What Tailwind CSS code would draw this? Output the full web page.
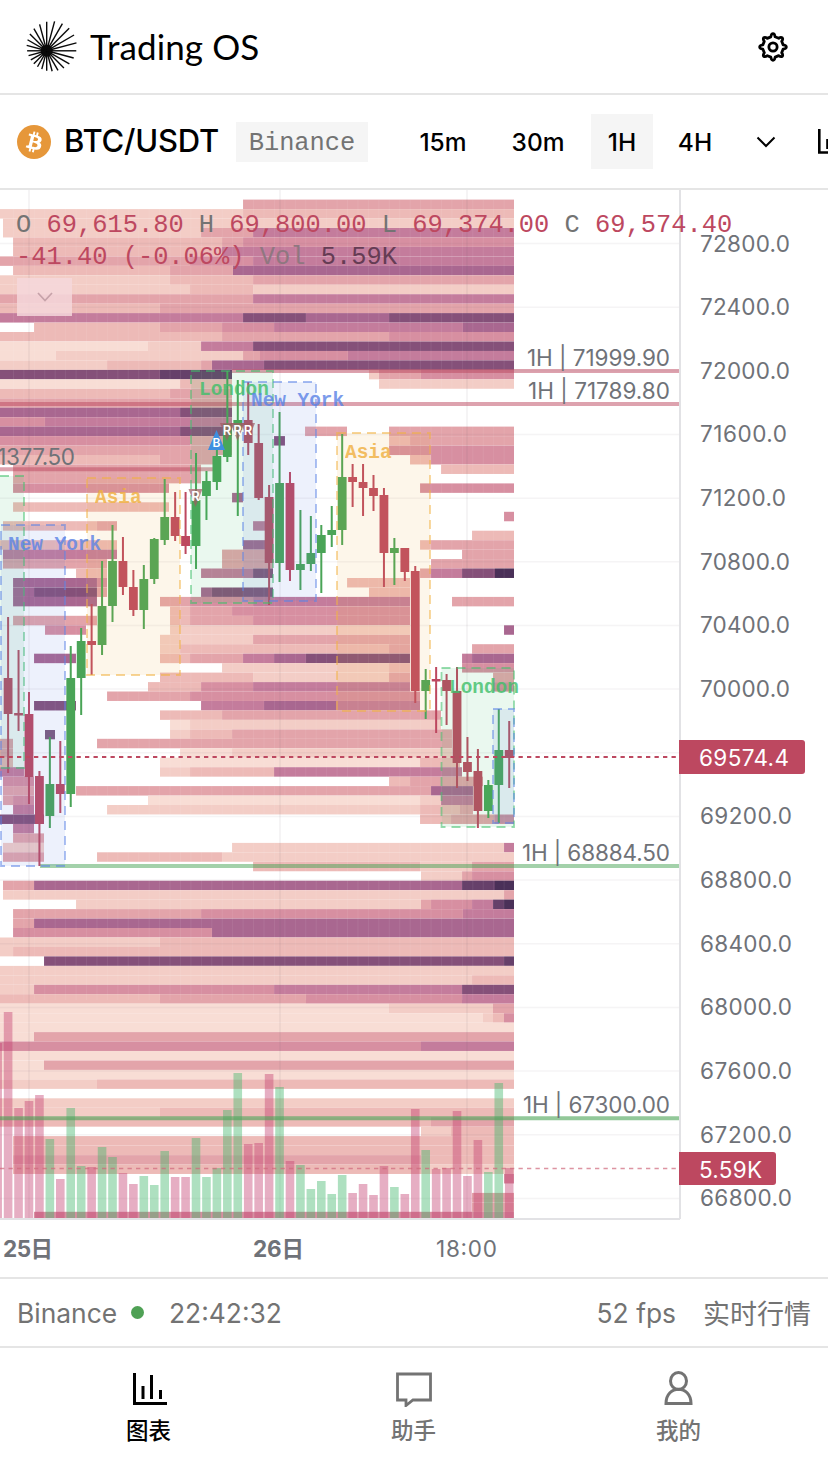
<!DOCTYPE html>
<html lang="zh">
<head>
    <meta charset="UTF-8">
    <meta name="viewport" content="width=device-width, initial-scale=1.0">
    <title>Trading OS</title>
    <script src="https://cdn.jsdelivr.net/npm/@tailwindcss/browser@4"></script>
</head>
<body class="bg-white text-black w-[828px] h-[1464px] overflow-hidden flex flex-col font-['Inter','Noto_Sans_CJK_SC',sans-serif]">
    <header class="h-[95px] shrink-0 border-b-2 border-[#e5e5e5] flex items-center justify-between pl-[26px] pr-[39px]">
        <div class="flex items-center gap-3">
            <svg id="logo" class="w-[52px] h-[52px] mb-0.5" viewBox="0 0 52 52"></svg>
            <h1 class="font-['Lato'] text-[35px] leading-none tracking-[0.1px]">Trading OS</h1>
        </div>
        <button>
            <svg class="w-8 h-8" viewBox="0 0 24 24" fill="none" stroke="currentColor" stroke-width="2.1" stroke-linejoin="round">
                <circle cx="12" cy="12" r="3.1"/>
                <path d="M19.62 10.4L18.52 7.74Q19.7 6.3 19 5.2Q17.9 4.3 16.26 5.48L13.56 4.37Q13.2 2 12 2Q10.8 2 10.35 4.4L7.7 5.5Q6.1 4.3 5 5Q4.3 6.1 5.45 7.79L4.37 10.45Q2 10.8 2 12Q2 13.2 4.4 13.65L5.5 16.3Q4.3 17.9 5 19Q6.1 19.7 7.79 18.54L10.4 19.6Q10.8 22 12 22Q13.2 22 13.6 19.6L16.26 18.5Q17.9 19.7 19 19Q19.7 17.9 18.52 16.25L19.6 13.6Q22 13.2 22 12Q22 10.8 19.62 10.4Z"/>
            </svg>
        </button>
    </header>

    <div class="h-[95px] shrink-0 border-b-2 border-[#e5e5e5] flex items-center pl-[17px] overflow-hidden whitespace-nowrap">
        <svg class="w-[34px] h-[34px] shrink-0" viewBox="0 0 32 32">
            <circle cx="16" cy="16" r="16" fill="#e6973a"/>
            <path fill="#fff" d="M23.189 14.02c.314-2.096-1.283-3.223-3.465-3.975l.708-2.84-1.728-.43-.69 2.765c-.454-.114-.92-.22-1.385-.326l.695-2.783L15.596 6l-.708 2.839c-.376-.086-.746-.17-1.104-.26l.002-.009-2.384-.595-.46 1.846s1.283.294 1.256.312c.7.175.826.638.805 1.006l-.806 3.235c.048.012.11.03.18.057l-.183-.045-1.13 4.532c-.086.212-.303.531-.793.41.018.025-1.256-.313-1.256-.313l-.858 1.978 2.25.561c.418.105.828.215 1.231.318l-.715 2.872 1.727.43.708-2.84c.472.127.93.245 1.378.357l-.706 2.828 1.728.43.715-2.866c2.948.558 5.164.333 6.097-2.333.752-2.146-.037-3.385-1.588-4.192 1.13-.26 1.98-1.003 2.207-2.538zm-3.95 5.538c-.533 2.147-4.148.986-5.32.695l.95-3.805c1.172.293 4.929.872 4.37 3.11zm.535-5.569c-.487 1.953-3.495.96-4.47.717l.86-3.45c.975.243 4.118.696 3.61 2.733z"/>
        </svg>
        <span class="ml-[13px] w-[172px] shrink-0 text-[31px] font-medium tracking-[-0.2px]">BTC/USDT</span>
        <span class="w-[132px] h-10 pt-[5px] shrink-0 bg-[#f5f5f5] text-[#737373] flex items-center justify-center font-['Liberation_Mono',monospace] text-[25.4px]">Binance</span>
        <div class="ml-[33px] flex shrink-0 items-center text-[24.500px] font-medium">
            <span class="w-[84px] pt-px text-center">15m</span>
            <span class="w-[106px] pt-px text-center">30m</span>
            <span class="w-[62px] h-[55px] pt-px bg-[#f5f5f5] flex items-center justify-center">1H</span>
            <span class="w-[84px] pt-px text-center">4H</span>
        </div>
        <svg class="ml-[19px] w-5 h-3 shrink-0" viewBox="0 0 20 12" fill="none" stroke="currentColor" stroke-width="2"><path d="M1.500 1.500L10 10L18.500 1.500"/></svg>
        <svg class="ml-[42px] w-8 h-7 shrink-0" viewBox="0 0 32 28" fill="none" stroke="currentColor" stroke-width="2.600"><path d="M1.300 1V24.500H30M9.500 21V11"/></svg>
    </div>

    <main class="relative h-[1087px] shrink-0">
        <svg id="chart" class="block w-[828px] h-[1087px] font-['Inter','Noto_Sans_CJK_SC',sans-serif]" viewBox="0 190 828 1087"></svg>
        <div class="absolute left-4 top-[20px] font-['Liberation_Mono',monospace] text-[25.4px] leading-8 text-[#bd4860] whitespace-nowrap">
            <p><span class="text-[#737373]">O</span> 69,615.80 <span class="text-[#737373]">H</span> 69,800.00 <span class="text-[#737373]">L</span> 69,374.00 <span class="text-[#737373]">C</span> 69,574.40</p>
            <p>-41.40 (-0.06%) <span class="text-[#8f7780]">Vol</span> <span class="text-[#653c54]">5.59K</span></p>
        </div>
        <button class="absolute left-[17px] top-[88px] w-[55px] h-[38px] bg-[#f4d7db]/85 flex items-center justify-center">
            <svg class="w-4 h-2.5" viewBox="0 0 16 10" fill="none" stroke="#c6a2a9" stroke-width="1.700"><path d="M1 1L8 8.500L15 1"/></svg>
        </button>
    </main>

    <div class="h-[71px] shrink-0 border-y-2 border-[#e5e5e5] flex items-center justify-between px-[17px] text-[26.400px] text-[#737373]">
        <div class="flex items-center">
            <span class="w-[101px] pt-0.5">Binance</span>
            <span class="ml-[13px] w-[13px] h-[13px] rounded-full bg-[#4fa155]"></span>
            <span class="ml-[25px] pt-0.5">22:42:32</span>
        </div>
        <div class="flex items-center gap-[27px]">
            <span class="pt-0.5">52 fps</span>
            <span class="pt-1.5 text-[27px]">实时行情</span>
        </div>
    </div>

    <nav class="flex-1 flex text-[22.500px] font-medium text-[#737373] pl-[16px] pr-[17px]">
        <a class="flex-1 flex flex-col items-center pt-[23px] text-black">
            <svg class="w-9 h-9" viewBox="0 0 36 36" fill="none" stroke="currentColor" stroke-width="3"><path d="M3.500 2V32.500H36M12 28V15M20.500 28V4M29.500 28V19"/></svg>
            <span class="leading-8 mt-2">图表</span>
        </a>
        <a class="flex-1 flex flex-col items-center pt-[23px]">
            <svg class="w-9 h-9" viewBox="0 0 36 36" fill="none" stroke="currentColor" stroke-width="2.800"><path d="M1.500 3H34.500V29H17L10 34.500V29H1.500Z"/></svg>
            <span class="leading-8 mt-2">助手</span>
        </a>
        <a class="flex-1 flex flex-col items-center pt-[23px]">
            <svg class="w-9 h-9" viewBox="0 0 36 36" fill="none" stroke="currentColor" stroke-width="3"><ellipse cx="17.500" cy="10" rx="8" ry="8.500"/><path d="M5 32.500C5 13.500 30 13.500 30 32.500Z"/></svg>
            <span class="leading-8 mt-2">我的</span>
        </a>
    </nav>

    <script>
        // Logo: 24 rays from an off-centre hub out to a circle
        let rays = '<circle cx="20.7" cy="30.8" r="6" fill="#0a0a0a"/>';
        for (let a = 0; a < 360; a += 15) {
            const dx = Math.cos(a * Math.PI / 180), dy = Math.sin(a * Math.PI / 180);
            const ox = 20.7 - 25.7, oy = 30.8 - 26.2;
            const b = ox * dx + oy * dy;
            const t = -b + Math.sqrt(b * b - (ox * ox + oy * oy - 625));
            rays += `<path d="M20.7 30.8L${20.7 + dx * t} ${30.8 + dy * t}" stroke="#0a0a0a" stroke-width="1.4"/>`;
        }
        document.getElementById('logo').innerHTML = rays;

        const shades = {
            a: '#f8ddd5', b: '#f3cdc6', c: '#edbab7', d: '#e3a4aa', e: '#d78fa1',
            f: '#c47c9c', g: '#a96790', h: '#855079', i: '#66406a', j: '#4a3058'
        };
        // One line per price bucket: start x + shade, "_" leaves a hole
        const heat = `243d
0b 243c
3b 243b
3b 201d 253f
13c 222d 243e
13c 222f
0d 190e 253f
13c 170d 233g
0b 170c 253d
0b 190c 253b
0d 253f
0c 160d
0f 190f 243h 306g 389h
34c 160d 222e 274f 463g
0c 222d 389e
0a 148b 201f 253h
0a 56b 243d 260e 348f
0b 107c 201d 212g 264h
0h 34h 160i 232_ 369b 379d 421e
0a 180c 232_ 379b
0c 170d 232_
0d 232_
0g 45g 180h 232_
0e 45f 232_
0g 180h 232_ 305d 347_ 389d
0e 190d 232_ 274h 285_ 389c 410d
0d 160d 232_ 389e
0c 160d 217_ 410c 431e
13d 201_ 441c
13d 201_
13e 169_ 420e
232g 243_
13c 169_
504e
3c 97d 117_ 253f 273_
472c
0c 117_ 243g 273_ 420c 431d
3f 117_ 222d 273_ 462d
3d 107_ 222d 273_ 431d
76c 107_ 201f 253h 273_ 420d 431f 462h 495j
13g 97e 107_ 347c 410_
13g 34h 97d 107_ 201g 212h 273_ 369c 410_
13g 97_ 160d 190e 253f 410_ 452d
170c 190d 232e 410_
13d 97_ 170c 190d 253e 410_
45e 86_ 170b 410_ 504g
160b 253d 410_
160b 180c 389d 410_ 472d
34g 76_ 160c 190d 243f 274g 306h 410_ 462f 472g
222b 389c 410_ 462e
160c 253b 389d 410_ 493d
148c 201e 253f 410_ 493e
107d 190e 420_
34h 76_ 201f 264g 336f 420_
160c 222d 441_
170a 190b 441_
170b 190c 232d 452_
0d 13_ 97d 452_
0d 13_ 180a 232b 452_
0c 13_ 160a 420c 460_
0f 24_ 160b 190c 274f 306f 462_
3e 34_ 389c 410d 483_
3d 34_ 76d 210d 431g 473_
3d 13e 34_ 148a 420b 441f 473_
13f 34_ 107b 420c 460d 473_
0h 44_ 420c 451d 495e
13f 34_
13d 44_
3b 13b 44_ 232b 504f
3d 44_ 97c 222b
253c 420b 472d
420_ 421b 462d 472e
3d 34g 462i 495j
3b 504d
76b 421d 431e 472f 493i 504j
13d 201e 253e 463f
13d 34g
13e 212g
0b 160c
0b 13c
44h 504i
0b 160b
0b 472c
0b 34e 274f 462h
0c 160d 306e 462f
0a 389b 493d
0a 160a 483b 493c 504e
0a
0a 34d
0e 421f
0a
0a 44d
0a
0b 97c

0b
0b 160c
0c 431d
421b 451c
13c
13c
13d 421c
13c 421b
504e

472d
472d
34e`.split('\n');

        const sets = { r: '#bd4860', g: '#4aa457' };
        const X = i => 8.1 + i * 10.44;
        const rect = (x, y, w, h, fill, o = 1) => `<rect x="${x}" y="${y}" width="${w}" height="${h}" fill="${fill}" opacity="${o}"/>`;
        const line = (x1, y1, x2, y2, c, w = 1, extra = '') => `<line x1="${x1}" y1="${y1}" x2="${x2}" y2="${y2}" stroke="${c}" stroke-width="${w}" ${extra}/>`;
        let out = '';

        heat.forEach((row, r) => {
            const cells = row.trim().split(' ').filter(Boolean).map(c => [parseInt(c), c.slice(-1)]);
            const y = 199.6 + r * 9.46;
            cells.forEach(([x, s], n) => {
                if (s === '_') return;
                const end = n + 1 < cells.length ? cells[n + 1][0] : 514;
                out += rect(x, y.toFixed(1), end - x, Math.min(9.46, 1218 - y), shades[s]);
            });
        });
        for (let k = 1; k < 49; k++) out += line(3 + k * 10.44, 200, 3 + k * 10.44, 1000, '#fff', 0.6, 'opacity="0.12"');

        // Grid
        for (let n = 0; n < 16; n++) out += line(0, 243.5 + n * 63.66, 679, 243.5 + n * 63.66, '#6b5b6b', 1.5, 'opacity="0.06"');
        [29, 280, 467].forEach(x => out += line(x, 190, x, 1218, '#6b5b6b', 1.8, 'opacity="0.07"'));

        // Volume
        const volume = `r1043 r1012 r1108 r1101 r1095 g1139 r1179 g1108 g1166 r1167 g1147 g1157 r1173 r1184 g1176 g1185 g1151 r1177 r1177 g1138 g1177 g1168 g1110 g1073 r1144 r1143 r1074 g1087 r1161 g1165 g1189 g1181 g1194 g1175 r1193 r1184 r1195 r1166 g1187 r1194 r1109 g1150 r1169 r1168 r1111 r1176 r1140 g1172 g1083 r1168`.split(' ');
        volume.forEach((v, n) => {
            const y = +v.slice(1);
            out += rect(X(n - 1) - 4.3, y, 8.6, 1218 - y, v[0] === 'r' ? '#c43d70' : '#3fb46a', 0.42);
        });

        // Price levels
        out += line(232, 371, 679, 371, '#bd4860', 4, 'opacity="0.5"');
        out += line(0, 404, 679, 404, '#bd4860', 4, 'opacity="0.5"');
        out += line(0, 469.3, 217, 469.3, '#bd4860', 4, 'opacity="0.5"');
        out += line(40, 866, 679, 866, '#4aa457', 4, 'opacity="0.5"');
        out += line(0, 1118.3, 679, 1118.3, '#4aa457', 4, 'opacity="0.6"');

        // Candles: high, body top, body bottom, low
        const candles = `r617 678 714 773|r650 713 715.5 731|r692 714 777 804|r771 776 824 866|g737 784 816 828|r741 784 794 813|g646 678 794 807|g628 641 678 715|r604 641 645 675|g561 606 645 655|g525 561 606 622|r537 561 587 595|r570 587 610 616|g565 579 610 629|g538 539 579 584|g479 517 540 545|r492 517 536 541|r492 536 546 554|g453 500 546 569|g471 481 496 520|g450 456 482 490|g371 424 457 462|g380 420 430 516|r382 420 443 455|r424 443 498 500|r485 497 563 605|g412 483 563 582|r472 483 570 581|g510 564 570 590|g516 553 564 571|g525 535 553 593|g506 530 535 547|g434 477 530 545|r464 477 482 507|r464 482 488 516|r475 488 496 511|r488 495 553 587|g538 548 553 585|r548 548 572 581|r566 571 691 703|g669 680 691 719|r667 679 681.5 733|r674 680 691 725|r667 691 763 788|r737 762 772 781|r749 771 811 828|g780 785 811 818|g709 750 785 823|r721 750 758 788`.split('|');
        const sessions = [
            [-60, 476, 84, 292, '#3fbf6a', '', 0, 0],
            [1, 525, 64, 341, '#5b83e6', 'New York', 8, 550],
            [87, 478, 93, 197, '#f0b040', 'Asia', 95, 503],
            [191, 371, 82, 232, '#3fbf6a', 'London', 199, 395],
            [243, 382, 73, 219, '#5b83e6', 'New York', 251, 406],
            [337, 433, 93, 278, '#f0b040', 'Asia', 345, 458],
            [441.500, 668, 72.500, 159, '#3fbf6a', 'London', 449, 693],
            [493, 709, 21, 114, '#5b83e6', '', 0, 0]
        ];
        out += rect(45, 730, 10, 9.3, '#7d5a7c');
        candles.forEach((c, i) => {
            const [hi, t, b, lo] = c.slice(1).split(' ').map(Number);
            const col = sets[c[0]];
            out += rect(X(i) - 1, hi, 2, lo - hi, col) + rect(X(i) - 4.4, t, 8.8, b - t, col);
        });
        // Session boxes tint the candles below them
        sessions.forEach(([x, y, w, h, c]) => out += `<rect x="${x}" y="${y}" width="${w}" height="${h}" fill="${c}" fill-opacity="0.11" stroke="${c}" stroke-opacity="0.55" stroke-width="1.8" stroke-dasharray="9 6"/>`);
        sessions.forEach(([, , , , c, name, x, y]) => {
            if (name) out += `<text x="${x}" y="${y}" fill="${c}" opacity="0.8" font-family="Liberation Mono" font-weight="bold" font-size="19.4">${name}</text>`;
        });

        // Signal markers
        [[227, 430], [237.500, 430], [248, 430], [195.500, 496]].forEach(([x, y]) => {
            out += `<path d="M${x - 7} ${y - 7}H${x + 7}L${x} ${y + 11}Z" fill="#a05a62" opacity="0.7"/>`;
            out += `<text x="${x}" y="${y + 5}" text-anchor="middle" fill="#fff" font-weight="600" font-size="13">R</text>`;
        });
        out += '<path d="M216.500 430L225 450H208Z" fill="#3d8fe0"/><text x="216.500" y="447" text-anchor="middle" fill="#fff" font-weight="600" font-size="12">B</text>';

        // Last price and volume
        out += line(0, 757, 679, 757, '#bd4860', 2, 'stroke-dasharray="4.3 4.2"');
        out += line(0, 1168.500, 679, 1168.500, '#d0687c', 1.6, 'stroke-dasharray="4.3 4.2" opacity="0.7"');

        const label = (x, y, s, w, fill = '#6f7278', extra = '') => `<text x="${x}" y="${y}" font-size="22.5" fill="${fill}" textLength="${w}" ${extra}>${s}</text>`;
        out += label(527, 366, '1H | 71999.90', 143) + label(528, 399, '1H | 71789.80', 142) + label(522, 861, '1H | 68884.50', 148) + label(523, 1113, '1H | 67300.00', 147);
        out += label(-15, 465, '71377.50', 90);

        // Axes
        out += line(680, 190, 680, 1219, '#e2e2e5', 2) + line(0, 1219, 680, 1219, '#e2e2e5', 2);
        for (let n = 0; n < 16; n++) {
            const p = 72800 - n * 400;
            if (p !== 69600) out += label(700, 251.500 + n * 63.66, p + '.0', p === 71200 ? 86 : p === 71600 ? 87 : p > 69600 ? 90 : 92);
        }
        out += '<path d="M679 740H802a3 3 0 0 1 3 3V771a3 3 0 0 1-3 3H679Z" fill="#bd4860"/>' + label(699, 765.500, '69574.4', 90, '#fff');
        out += '<path d="M679 1152H773a3 3 0 0 1 3 3V1182a3 3 0 0 1-3 3H679Z" fill="#bd4860"/>' + label(699, 1177.500, '5.59K', 63, '#fff');
        out += label(3, 1256.500, '25日', 50, '#6f7278', 'font-weight="700"') + label(253, 1256.500, '26日', 51, '#6f7278', 'font-weight="700"') + label(436, 1256.500, '18:00', 61);
        document.getElementById('chart').innerHTML = out;
    </script>
</body>
</html>
